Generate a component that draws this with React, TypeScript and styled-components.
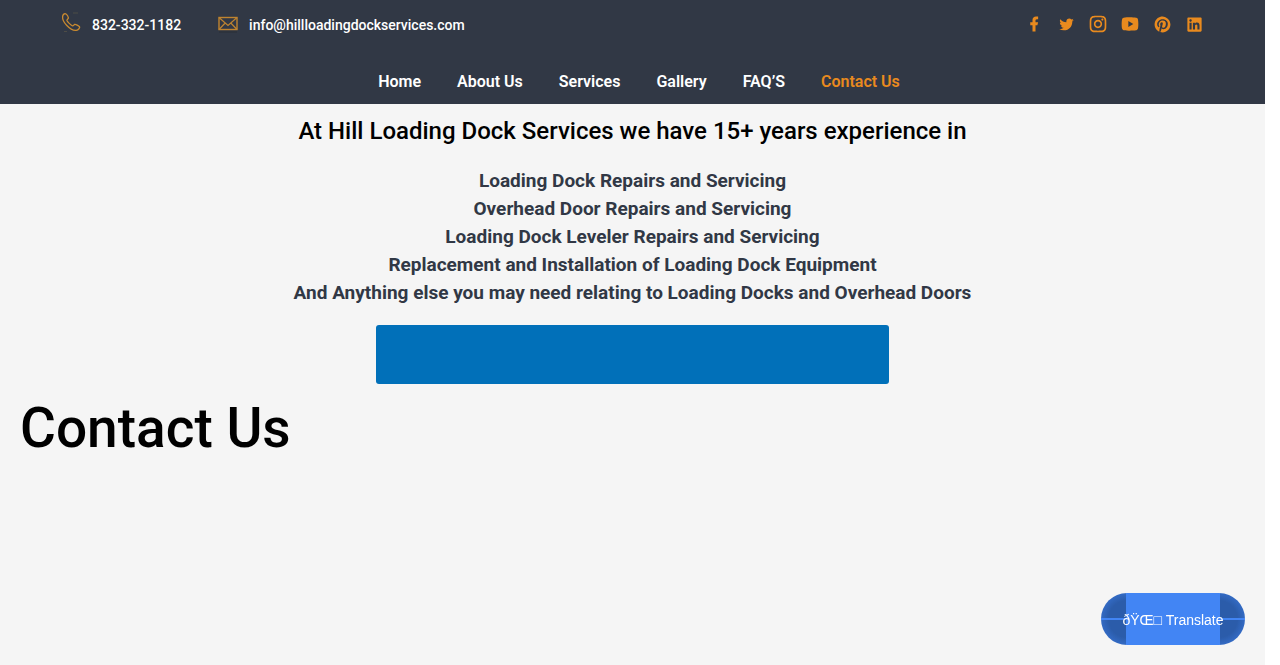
import React from "react";
import styled, { createGlobalStyle } from "styled-components";
import {
  RiFacebookFill,
  RiTwitterFill,
  RiInstagramLine,
  RiYoutubeFill,
  RiPinterestFill,
  RiLinkedinBoxFill,
} from "react-icons/ri";

const GlobalStyle = createGlobalStyle`
  * { box-sizing: border-box; }
  html { background: #ffffff; }
  body { margin: 0; font-family: Roboto, "Liberation Sans", sans-serif; }
  h1, h2, p, ul { margin: 0; padding: 0; }
  ul { list-style: none; }
  a { color: inherit; text-decoration: none; }
`;

const Page = styled.div`
  min-height: 100vh;
  margin-right: 15px;
  background: #f5f5f5;
`;

const Header = styled.header`
  background: #313845;
  color: #ffffff;
`;

const TopBar = styled.div`
  display: flex;
  justify-content: space-between;
  height: 58px;
  padding: 12px 61px 0;
`;

const ContactList = styled.div`
  display: flex;
  align-items: flex-start;
  gap: 37px;
`;

const ContactLink = styled.a`
  display: flex;
  gap: 11px;
  font-size: 14px;
  font-weight: 500;
  line-height: 26px;

  svg { flex: none; overflow: visible; }
`;

const SocialList = styled.ul`
  display: flex;
  gap: 12px;
  padding-top: 2px;
  color: #e98a1e;
`;

const SocialLink = styled.a<{ $size: number }>`
  display: flex;
  align-items: center;
  justify-content: center;
  width: 20px;
  height: 20px;
  font-size: ${(p) => p.$size}px;
`;

const Nav = styled.nav`
  display: flex;
  justify-content: center;
  gap: 36px;
  height: 46px;
  padding-left: 13px;
`;

const NavLink = styled.a<{ $active?: boolean }>`
  font-size: 16px;
  font-weight: 600;
  line-height: 48px;
  color: ${(p) => (p.$active ? "#e98a1e" : "#ffffff")};
`;

const Main = styled.main`
  display: flex;
  flex-direction: column;
  align-items: center;
  padding-top: 12px;
`;

const Intro = styled.h2`
  font-size: 24px;
  font-weight: 500;
  line-height: 30px;
`;

const ServiceList = styled.ul`
  padding: 21px 0 18px;
  color: #313845;
  font-size: 19px;
  font-weight: 700;
  line-height: 28px;
  text-align: center;
`;

const CallLink = styled.a`
  width: 513px;
  max-width: 100%;
  height: 59px;
  margin-bottom: 8px;
  border-radius: 3px;
  background: #0170b9;
`;

const Title = styled.h1`
  align-self: flex-start;
  padding-left: 20px;
  font-size: 55px;
  font-weight: 500;
  line-height: 72px;
`;

const TranslateButton = styled.button`
  position: fixed;
  right: 35px;
  bottom: 20px;
  width: 144px;
  height: 52px;
  padding: 2px 0 0;
  border: 0;
  border-radius: 26px;
  background:
    linear-gradient(#4285f4, #4285f4) center / 94px 100% no-repeat,
    linear-gradient(#4285f4, #4285f4) center / 100% 2px no-repeat,
    radial-gradient(circle at 26px 26px, #2b5caa 50%, #3f7fe9 100%) left / 26px 52px no-repeat,
    radial-gradient(circle at 0 26px, #2b5caa 50%, #3f7fe9 100%) right / 26px 52px no-repeat;
  color: #ffffff;
  font: 14px "Liberation Sans", sans-serif;
  white-space: nowrap;
`;

const social = [
  { label: "Facebook", Icon: RiFacebookFill, size: 18 },
  { label: "Twitter", Icon: RiTwitterFill, size: 17 },
  { label: "Instagram", Icon: RiInstagramLine, size: 20 },
  { label: "YouTube", Icon: RiYoutubeFill, size: 20 },
  { label: "Pinterest", Icon: RiPinterestFill, size: 19 },
  { label: "LinkedIn", Icon: RiLinkedinBoxFill, size: 19 },
];

const navItems = ["Home", "About Us", "Services", "Gallery", "FAQ’S", "Contact Us"];

const services = [
  "Loading Dock Repairs and Servicing",
  "Overhead Door Repairs and Servicing",
  "Loading Dock Leveler Repairs and Servicing",
  "Replacement and Installation of Loading Dock Equipment",
  "And Anything else you may need relating to Loading Docks and Overhead Doors",
];

const PhoneIcon = () => (
  <svg width="20" height="20" viewBox="0 0 20 20" fill="none" stroke="#c98a30" strokeWidth="1.3" strokeLinejoin="round" aria-hidden="true">
    <path d="M1.6 4.6C1.8 2.8 3 1.7 4.2 1.6C5 1.6 5.8 2.4 6.6 3.8C7.4 5.2 7.6 5.9 7.1 6.6C6.6 7.3 5.8 7.6 5.9 8.4C6.2 9.7 9.9 13.3 11.5 13.8C12.5 14 12.9 12.7 13.7 12.4C14.6 12.1 17.8 13.9 18.5 14.7C19.2 15.7 17.4 18 15.4 18.3C13 18.7 8.8 16.6 5.6 13.2C2.8 10.3 1.4 7 1.6 4.6Z" />
    <path d="M12 1H17M3 19.5H6" stroke="#6a6048" strokeWidth="1" opacity=".5" />
  </svg>
);

const MailIcon = () => (
  <svg width="20" height="20" viewBox="0 0 20 20" fill="none" aria-hidden="true">
    <path d="M1 20H19" stroke="#292d35" strokeWidth="2" opacity=".5" />
    <rect x="1" y="5.5" width="18" height="12" stroke="#bf8430" strokeWidth="1.4" />
    <path d="M1 5.5L10 13.5L19 5.5M1 17.5L7.2 11M19 17.5L12.8 11" stroke="#bf8430" strokeWidth="1.2" />
  </svg>
);

export default function App() {
  return (
    <>
      <GlobalStyle />
      <Page>
        <Header>
          <TopBar>
            <ContactList>
              <ContactLink href="tel:8323321182">
                <PhoneIcon />
                832-332-1182
              </ContactLink>
              <ContactLink href="mailto:info@hillloadingdockservices.com">
                <MailIcon />
                info@hillloadingdockservices.com
              </ContactLink>
            </ContactList>
            <SocialList>
              {social.map(({ label, Icon, size }) => (
                <li key={label}>
                  <SocialLink href="#" aria-label={label} $size={size}>
                    <Icon />
                  </SocialLink>
                </li>
              ))}
            </SocialList>
          </TopBar>
          <Nav>
            {navItems.map((item) => (
              <NavLink key={item} href="#" $active={item === "Contact Us"}>
                {item}
              </NavLink>
            ))}
          </Nav>
        </Header>
        <Main>
          <Intro>At Hill Loading Dock Services we have 15+ years experience in</Intro>
          <ServiceList>
            {services.map((s) => (
              <li key={s}>{s}</li>
            ))}
          </ServiceList>
          <CallLink href="tel:8323321182" aria-label="Call" />
          <Title>Contact Us</Title>
        </Main>
        <TranslateButton type="button">ðŸŒ□ Translate</TranslateButton>
      </Page>
    </>
  );
}
